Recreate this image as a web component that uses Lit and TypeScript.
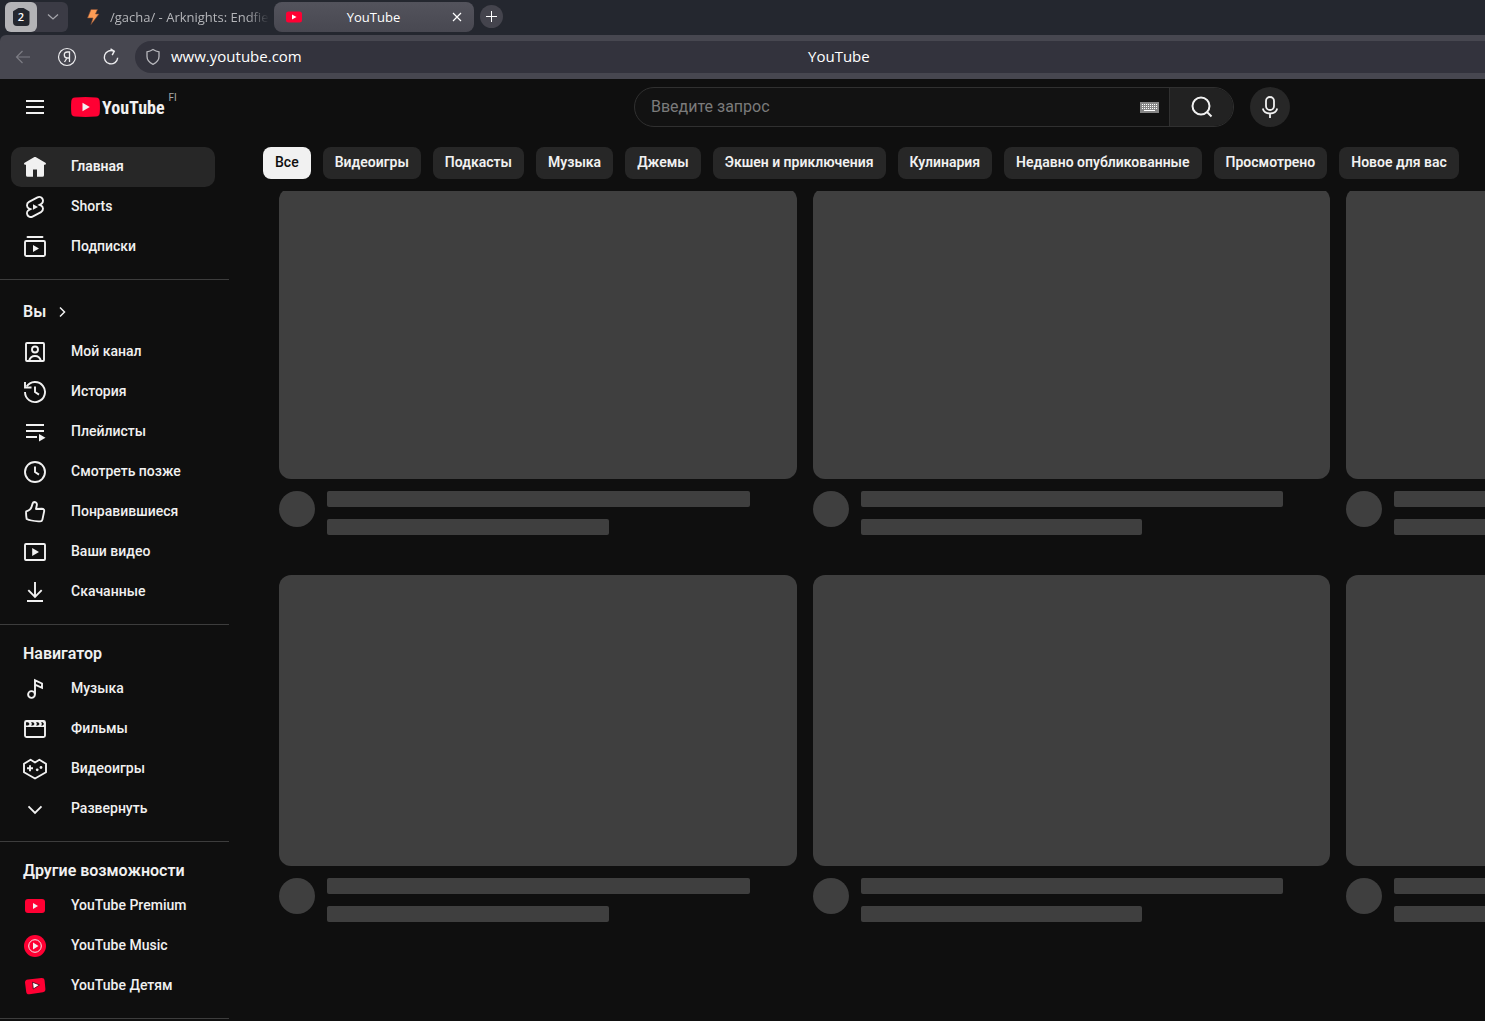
import { LitElement, html, svg, css, type SVGTemplateResult } from "lit";
import { customElement } from "lit/decorators.js";
import { classMap } from "lit/directives/class-map.js";

type Entry = { icon: string; label: string; active?: boolean };

const icons: Record<string, SVGTemplateResult> = {
  home: svg`<path class="fill" d="M11.4 2.1a1.2 1.2 0 0 1 1.2 0l9.8 5.7c1 .6.6 2-.5 2H21v10.4a1.6 1.6 0 0 1-1.6 1.6H14v-7.3h-4v7.3H4.6A1.6 1.6 0 0 1 3 20.2V9.8h-.9c-1.1 0-1.5-1.4-.5-2z"/>`,
  shorts: svg`<path d="m17.770 10.320-1.200-.5L18 9.060c1.840-.96 2.530-3.230 1.560-5.060s-3.240-2.530-5.070-1.560L6 6.940c-1.290.68-2.070 2.040-2 3.490.07 1.420.93 2.670 2.220 3.250l1.200.5L6 14.930c-1.830.97-2.530 3.240-1.560 5.070.97 1.830 3.240 2.530 5.070 1.560l8.500-4.500c1.290-.68 2.060-2.040 1.990-3.490-.07-1.420-.94-2.680-2.230-3.250z"/><path class="fill" d="M10 9.200v5.600l5-2.800z"/>`,
  subs: svg`<rect x="2" y="6" width="20" height="15" rx="1.200"/><path d="M4.500 2h15" stroke-linecap="round"/><path class="fill" d="M10 10v7l6-3.500z"/>`,
  channel: svg`<rect x="3" y="3" width="18" height="18" rx="1"/><circle cx="12" cy="9.500" r="3"/><path d="M6 21c1-3.800 3-5 6-5s5 1.200 6 5"/>`,
  history: svg`<path d="M2 12a10 10 0 1 0 1.600-5.400"/><path d="M2 2v5.500h6.500"/><path d="M12 6.500V12l4 2.600"/>`,
  playlist: svg`<path d="M3 5h18M3 11h18M3 17h11"/><path class="fill" d="M16 14v7.500l6.500-3.750z"/>`,
  clock: svg`<circle cx="12" cy="12" r="10"/><path d="M12 6.500V12l4 2.600"/>`,
  like: svg`<path d="M11.500 2c1.800.2 2.700 1.600 2.300 3.200L13 9l5.800-.3c1.900 0 2.700 1.200 2.300 2.900l-1.700 8c-.3 1.300-1.200 1.900-2.600 1.800-5.500-.3-9-.3-13.100-2.400-.5-2.500-.8-5.300-.5-7.700 2.700-.7 4.600-2 5.300-4.300l1.100-3.400c.3-1 .900-1.600 1.900-1.600z" stroke-linejoin="round"/>`,
  video: svg`<rect x="2" y="4" width="20" height="16" rx="1"/><path class="fill" d="M9.200 8v8l6.800-4z"/>`,
  download: svg`<path d="M12 2v14.500M5.300 10.200 12 16.900l6.700-6.700M4 21h16"/>`,
  music: svg`<circle cx="8.500" cy="17.500" r="3.400"/><path d="M12 17.500V3.300l7 3.200v4.300l-7-3.200"/>`,
  movies: svg`<rect x="2" y="4" width="20" height="16" rx="1.500"/><path class="fill" d="M2 4h20v6H2z"/><path class="hole" d="M3 5.200h2.200L6.600 7 5.200 8.600H3zM8 5.200h2.200L11.600 7l-1.400 1.600H8L9 7zM13 5.200h2.200L16.600 7l-1.400 1.600H13L14 7zM18 5.200h1.800L21 7l-1.200 1.600H18L19 7z"/>`,
  gaming: svg`<path d="M1 6.800 7.600 2.800 12 5.500l4.400-2.700L23 6.800v8.400L12 21.500 1 15.200z" stroke-linejoin="round"/><path d="M4 11.300h6M7 8.300v6"/><circle class="fill" cx="14.200" cy="12.800" r="1.400"/><circle class="fill" cx="18" cy="10.500" r="1.400"/>`,
  expand: svg`<path d="m5.500 9.300 6.500 6.500 6.500-6.500"/>`,
  premium: svg`<rect class="red" x="2" y="5" width="20" height="14" rx="3"/><path class="fill" d="M10 9v6l5-3z"/>`,
  ytmusic: svg`<circle class="red" cx="12" cy="12" r="11"/><circle cx="12" cy="12" r="6.300" stroke-width="1"/><path class="fill" d="M10 8.500v7l5.500-3.500z"/>`,
  kids: svg`<path class="red" d="M5 5.400 18.500 4c1.800-.1 2.900.7 3.100 2.500l.8 8.500c.1 1.800-.7 2.900-2.400 3.200L6.500 20.300c-2 .2-3-.6-3.300-2.600L2 8.600c-.1-1.900.9-3 3-3.200z"/><path d="m9.500 8.200.8 6.800 6.200-4z" fill="#fff" stroke="#3a0010" stroke-width=".8"/>`,
};

const sections: { title?: string; link?: boolean; items: Entry[] }[] = [
  {
    items: [
      { icon: "home", label: "Главная", active: true },
      { icon: "shorts", label: "Shorts" },
      { icon: "subs", label: "Подписки" },
    ],
  },
  {
    title: "Вы",
    link: true,
    items: [
      { icon: "channel", label: "Мой канал" },
      { icon: "history", label: "История" },
      { icon: "playlist", label: "Плейлисты" },
      { icon: "clock", label: "Смотреть позже" },
      { icon: "like", label: "Понравившиеся" },
      { icon: "video", label: "Ваши видео" },
      { icon: "download", label: "Скачанные" },
    ],
  },
  {
    title: "Навигатор",
    items: [
      { icon: "music", label: "Музыка" },
      { icon: "movies", label: "Фильмы" },
      { icon: "gaming", label: "Видеоигры" },
      { icon: "expand", label: "Развернуть" },
    ],
  },
  {
    title: "Другие возможности",
    items: [
      { icon: "premium", label: "YouTube Premium" },
      { icon: "ytmusic", label: "YouTube Music" },
      { icon: "kids", label: "YouTube Детям" },
    ],
  },
];

const chips = [
  "Все",
  "Видеоигры",
  "Подкасты",
  "Музыка",
  "Джемы",
  "Экшен и приключения",
  "Кулинария",
  "Недавно опубликованные",
  "Просмотрено",
  "Новое для вас",
];

const reset = css`
  :host,
  *,
  *::before,
  *::after {
    box-sizing: border-box;
  }
  button,
  input {
    font: inherit;
    color: inherit;
    border: 0;
    padding: 0;
    margin: 0;
    background: none;
  }
  a {
    color: inherit;
    text-decoration: none;
  }
  svg {
    display: block;
    flex: none;
    fill: none;
    stroke: currentColor;
  }
  .fill {
    fill: currentColor;
    stroke: none;
  }
  .hole {
    fill: #0f0f0f;
    stroke: none;
  }
  .red {
    fill: #ff0033;
    stroke: none;
  }
`;

@customElement("browser-chrome")
export class BrowserChrome extends LitElement {
  static styles = [
    reset,
    css`
      :host {
        display: block;
        flex: none;
        background: #24272f;
        color: #fff;
        font-family: "Open Sans", "Noto Sans", sans-serif;
      }
      .tabs {
        display: flex;
        height: 35px;
        padding: 2px 5px 3px;
      }
      .group {
        display: flex;
        width: 63px;
        height: 30px;
        border-radius: 6px;
        background: #3b3b45;
        color: #a5a5ab;
      }
      .count {
        display: grid;
        place-items: center;
        width: 32px;
        border-radius: 6px;
        background: #b3b3b6;
      }
      .count span {
        display: grid;
        place-items: center;
        width: 17px;
        height: 18px;
        border-radius: 4px;
        clip-path: polygon(0 20%, 35% 0, 65% 0, 100% 20%, 100% 100%, 0 100%);
        background: #24272f;
        color: #fff;
        font-size: 11px;
        line-height: 16px;
        font-weight: 600;
      }
      .more {
        display: grid;
        place-items: center;
        flex: 1;
      }
      .tab {
        display: flex;
        align-items: center;
        width: 200px;
        height: 30px;
        border-radius: 8px;
        font-size: 13px;
        line-height: 18px;
      }
      .idle {
        gap: 10px;
        padding: 0 0 0 18px;
        color: #b4b5b9;
        width: 206px;
      }
      .idle span {
        white-space: nowrap;
        mask-image: linear-gradient(90deg, #000 86%, transparent);
      }
      .current {
        padding: 0 12px;
        background: linear-gradient(#53535c, #484851);
      }
      .current span {
        flex: 1;
        padding-right: 7px;
        text-align: center;
      }
      .new {
        display: grid;
        place-items: center;
        width: 23px;
        height: 23px;
        margin: 3px 6px;
        border-radius: 50%;
        background: #44444d;
      }
      .bar {
        display: flex;
        align-items: center;
        height: 44px;
        padding-left: 11px;
        border-top-left-radius: 6px;
        background: #474750;
      }
      .tool {
        display: grid;
        place-items: center;
        width: 24px;
        height: 24px;
        margin-right: 20px;
        color: #ececee;
      }
      .back {
        color: #7c7c84;
      }
      .address {
        display: flex;
        align-items: center;
        flex: 1;
        height: 32px;
        margin-left: -8px;
        padding-left: 10px;
        border-radius: 16px 0 0 16px;
        background: #33333d;
        font-size: 15px;
        line-height: 20px;
      }
      .address span {
        padding-bottom: 2px;
      }
      .shield {
        color: #b8b8bd;
      }
      .url {
        flex: 0 0 128px;
        margin-left: 10px;
      }
      .page {
        flex: 1;
        padding-right: 109px;
        text-align: center;
      }
    `,
  ];

  render() {
    return html`
      <div class="tabs">
        <div class="group">
          <button class="count" aria-label="Вкладки"><span>2</span></button>
          <button class="more" aria-label="Список">
            <svg width="12" height="8" viewBox="0 0 12 8"><path d="m1 1.500 5 4.500 5-4.500" stroke-width="1.300" /></svg>
          </button>
        </div>
        <a class="tab idle" href="#gacha">
          <svg width="14" height="18" viewBox="0 0 14 18"><path d="M5 1.500h6.500L9.500 6H13L5 16.500 7 10H1.500z" fill="#ff9d55" stroke="#7a4a35" stroke-width=".6" /></svg>
          <span>/gacha/ - Arknights: Endfie</span>
        </a>
        <div class="tab current">
          <svg width="16" height="12" viewBox="0 0 16 12"><rect class="red" y=".5" width="16" height="11" rx="2.500" /><path class="fill" d="M6 3.500v5L10.500 6z" /></svg>
          <span>YouTube</span>
          <button aria-label="Закрыть">
            <svg width="10" height="10" viewBox="0 0 10 10"><path d="m1 1 8 8M9 1 1 9" stroke-width="1.200" /></svg>
          </button>
        </div>
        <button class="new" aria-label="Новая вкладка">
          <svg width="11" height="11" viewBox="0 0 11 11"><path d="M5.500 0v11M0 5.500h11" /></svg>
        </button>
      </div>
      <div class="bar">
        <button class="tool back" aria-label="Назад">
          <svg width="16" height="14" viewBox="0 0 16 14"><path d="M15 7H1.500M7.500 1l-6 6 6 6" stroke-width="1.200" /></svg>
        </button>
        <button class="tool" aria-label="Яндекс">
          <svg width="20" height="20" viewBox="0 0 20 20"><circle cx="10" cy="10" r="8.500" stroke-width="1.200" /><path d="M12.500 15V5h-2.200C8.300 5 7.300 6.300 7.300 8s1 3 3 3h2.200M10 11l-2.500 4" stroke-width="1.300" /></svg>
        </button>
        <button class="tool" aria-label="Обновить">
          <svg width="18" height="18" viewBox="0 0 18 18"><path d="M15.700 9.800a6.700 6.700 0 1 1-3.900-6.700M8.500.8l3.800 2.400-2.100 4" stroke-width="1.400" /></svg>
        </button>
        <div class="address">
          <svg class="shield" width="16" height="18" viewBox="0 0 16 18"><path d="M8 1.500c1.800 1.200 3.700 2 6 2.300v4.700c0 3.600-2.200 6-6 7.800-3.800-1.800-6-4.200-6-7.800V3.800c2.300-.3 4.200-1.100 6-2.300z" stroke-width="1.300" /></svg>
          <span class="url">www.youtube.com</span>
          <span class="page">YouTube</span>
        </div>
      </div>
    `;
  }
}

@customElement("yt-header")
export class YtHeader extends LitElement {
  static styles = [
    reset,
    css`
      :host {
        display: flex;
        align-items: center;
        height: 56px;
      }
      .start {
        display: flex;
        align-items: center;
        flex: 611 1 0;
        padding-left: 23px;
      }
      .end {
        flex: 195 1 0;
      }
      .logo {
        display: flex;
        align-items: center;
        margin-left: 24px;
      }
      .word {
        margin-left: 2px;
        padding-top: 2px;
        font: 700 18px/20px "Roboto Condensed", "Liberation Sans Narrow", "Roboto", sans-serif;
      }
      .region {
        align-self: flex-start;
        margin: -3px 0 0 4px;
        font-size: 10px;
        line-height: 10px;
        color: #aaa;
      }
      .search {
        display: flex;
        flex: 0 1 600px;
        height: 40px;
        border: 1px solid #303030;
        border-radius: 20px;
        background: #121212;
        overflow: hidden;
      }
      .field {
        display: flex;
        align-items: center;
        flex: 1;
        padding: 0 10px 0 16px;
      }
      input {
        flex: 1;
        min-width: 0;
        font-size: 16px;
        line-height: 24px;
        outline: 0;
      }
      input::placeholder {
        color: #7b7b7b;
      }
      .go {
        display: grid;
        place-items: center;
        width: 64px;
        border-left: 1px solid #303030;
        background: #222;
      }
      .mic {
        display: grid;
        place-items: center;
        flex: none;
        width: 40px;
        height: 40px;
        margin-left: 16px;
        border-radius: 50%;
        background: #272727;
      }
    `,
  ];

  render() {
    return html`
      <div class="start">
        <button aria-label="Меню">
          <svg width="24" height="24" viewBox="0 0 24 24" stroke-width="2"><path d="M3 6h18M3 12h18M3 18h18" /></svg>
        </button>
        <a class="logo" href="#home" aria-label="YouTube">
          <svg width="29" height="20" viewBox="0 0 29 20">
            <path class="red" d="M4 .4Q14.500-.4 25 .4c2.400.2 3.500 1.500 3.700 3.700q.5 5.900 0 11.800c-.2 2.200-1.300 3.500-3.700 3.700q-10.500.8-21 0C1.600 19.400.5 18.100.3 15.900q-.5-5.900 0-11.800C.5 1.900 1.600.6 4 .4z" />
            <path class="fill" d="M11.500 5.800v8.400l7.300-4.200z" />
          </svg>
          <span class="word">YouTube</span>
          <span class="region">FI</span>
        </a>
      </div>
      <form class="search">
        <div class="field">
          <input type="text" placeholder="Введите запрос" aria-label="Введите запрос" />
          <svg width="19" height="11" viewBox="0 0 19 11">
            <rect width="19" height="11" fill="#868686" stroke="none" />
            <path d="M2 2.500h15M2 4.500h15M2 6.500h15" stroke="#fff" stroke-dasharray="1 1" />
            <path d="M4 8.500h11" stroke="#fff" />
          </svg>
        </div>
        <button class="go" type="button" aria-label="Поиск">
          <svg width="24" height="24" viewBox="0 0 24 24" stroke-width="2"><circle cx="11" cy="11" r="8.500" /><path d="m17 17 4.500 4.500" /></svg>
        </button>
      </form>
      <button class="mic" aria-label="Голосовой поиск">
        <svg width="24" height="24" viewBox="0 0 24 24" stroke-width="1.800"><rect x="8" y="2" width="8" height="13" rx="4" /><path d="M4.800 13.500c.8 3.300 3.500 5 7.200 5s6.400-1.700 7.200-5M12 18.500V23" /></svg>
      </button>
      <div class="end"></div>
    `;
  }
}

@customElement("yt-guide")
export class YtGuide extends LitElement {
  static styles = [
    reset,
    css`
      :host {
        display: block;
        flex: 0 0 229px;
      }
      section {
        padding: 12px 14px 12px 11px;
        border-bottom: 1px solid #3d3d3d;
      }
      .item {
        display: flex;
        align-items: center;
        gap: 24px;
        height: 40px;
        padding: 0 12px;
        border-radius: 10px;
        font-size: 14px;
        line-height: 20px;
        font-weight: 500;
      }
      .item span {
        padding-bottom: 2px;
      }
      .active {
        background: #272727;
        font-weight: 600;
      }
      .title {
        display: flex;
        align-items: center;
        gap: 8px;
        height: 32px;
        margin: 0;
        padding: 2px 12px 0;
        font-size: 16px;
        line-height: 22px;
        font-weight: 600;
      }
      .tall {
        height: 40px;
        padding-top: 0;
      }
    `,
  ];

  render() {
    return html`<nav>
      ${sections.map(
        (s) => html`<section>
          ${s.title
            ? html`<h3 class=${classMap({ title: true, tall: !!s.link })}>
                ${s.link
                  ? html`<a href="#you">${s.title}</a
                      ><svg width="16" height="16" viewBox="0 0 16 16"><path d="m6 3.500 4.500 4.500L6 12.500" stroke-width="1.500" /></svg>`
                  : s.title}
              </h3>`
            : null}
          ${s.items.map(
            (i) => html`<a class=${classMap({ item: true, active: !!i.active })} href="#${i.icon}">
              <svg width="24" height="24" viewBox="0 0 24 24" stroke-width="1.900">${icons[i.icon]}</svg>
              <span>${i.label}</span>
            </a>`,
          )}
        </section>`,
      )}
    </nav>`;
  }
}

@customElement("app-root")
export class AppRoot extends LitElement {
  static styles = [
    reset,
    css`
      :host {
        display: flex;
        flex-direction: column;
        height: 100vh;
        overflow: hidden;
        background: #0f0f0f;
        color: #f1f1f1;
        font-family: "Roboto", "Liberation Sans", sans-serif;
      }
      yt-header {
        flex: none;
      }
      .body {
        display: flex;
        flex: 1;
        min-height: 0;
      }
      main {
        flex: 1;
        min-width: 0;
        padding: 12px 0 0 34px;
        overflow: hidden;
      }
      .chips {
        display: flex;
        gap: 12px;
      }
      .chip {
        flex: none;
        height: 32px;
        padding: 0 12px 2px;
        border-radius: 8px;
        background: #272727;
        font-size: 14px;
        line-height: 20px;
        font-weight: 600;
      }
      .chosen {
        background: #f1f1f1;
        color: #0f0f0f;
        font-weight: 500;
      }
      .feed {
        margin: 12px 0 0 16px;
        overflow: hidden;
      }
      .grid {
        display: grid;
        grid-template-columns: repeat(3, 42.92%);
        gap: 40px 16px;
        margin-top: -3px;
      }
      .thumb {
        aspect-ratio: 16 / 9;
        border-radius: 12px;
        background: #3f3f3f;
      }
      .details {
        display: flex;
        gap: 12px;
        margin-top: 12px;
      }
      .avatar {
        flex: none;
        width: 36px;
        height: 36px;
        border-radius: 50%;
        background: #3f3f3f;
      }
      .lines {
        display: grid;
        flex: 1;
        gap: 12px;
      }
      .line {
        width: 90%;
        height: 16px;
        border-radius: 2px;
        background: #3f3f3f;
      }
      .short {
        width: 60%;
      }
    `,
  ];

  render() {
    return html`
      <browser-chrome></browser-chrome>
      <yt-header></yt-header>
      <div class="body">
        <yt-guide></yt-guide>
        <main>
          <div class="chips">
            ${chips.map((c, i) => html`<button class=${classMap({ chip: true, chosen: i === 0 })}>${c}</button>`)}
          </div>
          <div class="feed">
            <div class="grid">
              ${Array.from(
                { length: 6 },
                () => html`<article>
                  <div class="thumb"></div>
                  <div class="details">
                    <div class="avatar"></div>
                    <div class="lines">
                      <div class="line"></div>
                      <div class="line short"></div>
                    </div>
                  </div>
                </article>`,
              )}
            </div>
          </div>
        </main>
      </div>
    `;
  }
}
